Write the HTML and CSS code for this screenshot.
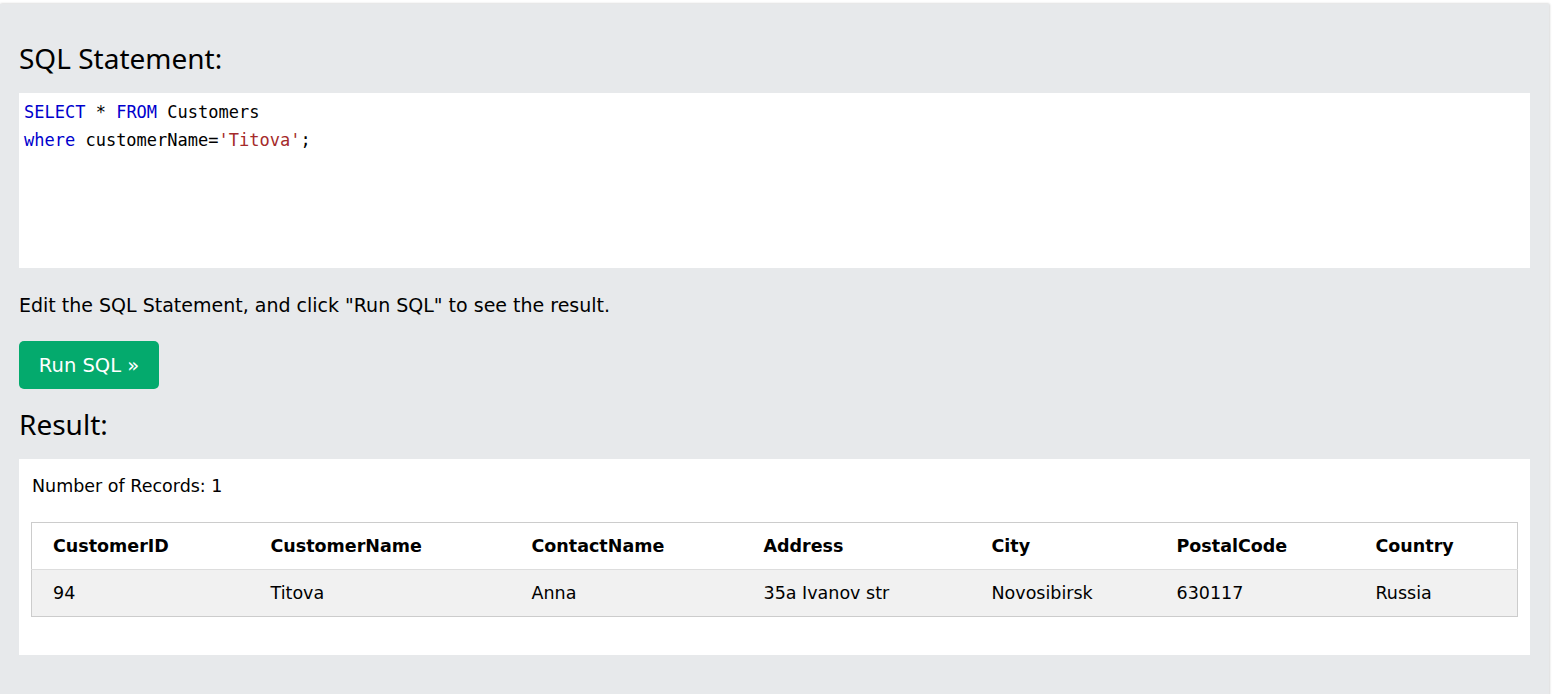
FILE: index.html
```html
<!DOCTYPE html>
<html>
<head>
<meta charset="utf-8">
<link rel="stylesheet" href="styles.css">
</head>
<body>
<div class="panel">
  <h2 class="title">SQL Statement:</h2>
  <div class="code">
    <div class="code-line"><span class="kw">SELECT</span> * <span class="kw">FROM</span> Customers</div>
    <div class="code-line"><span class="kw">where</span> customerName=<span class="str">'Titova'</span>;</div>
  </div>
  <p class="hint">Edit the SQL Statement, and click "Run SQL" to see the result.</p>
  <button class="run">Run SQL &raquo;</button>
  <h2 class="title result-title">Result:</h2>
  <div class="result">
    <div class="count">Number of Records: 1</div>
    <table class="grid">
      <colgroup>
        <col class="c1"><col class="c2"><col class="c3"><col class="c4"><col class="c5"><col class="c6"><col class="c7">
      </colgroup>
      <tr class="head">
        <th>CustomerID</th><th>CustomerName</th><th>ContactName</th><th>Address</th><th>City</th><th>PostalCode</th><th>Country</th>
      </tr>
      <tr class="row">
        <td>94</td><td>Titova</td><td>Anna</td><td>35a Ivanov str</td><td>Novosibirsk</td><td>630117</td><td>Russia</td>
      </tr>
    </table>
  </div>
</div>
</body>
</html>
```
FILE: styles.css
```css
html, body {
  margin: 0;
  padding: 0;
  background: #ffffff;
}
body {
  font-family: "DejaVu Sans", Verdana, sans-serif;
  color: #000;
  overflow: hidden;
}
.panel {
  margin-top: 4px;
  width: 1549px;
  height: 700px;
  box-sizing: border-box;
  background: #e7e9eb;
  padding: 37px 19px 0 19px;
  box-shadow: 0 -1px 2px rgba(0,0,0,0.08), 1px 0 2px rgba(0,0,0,0.12);
}
.title {
  margin: 0;
  font-family: "Noto Sans", "Open Sans", sans-serif;
  font-weight: 400;
  font-size: 28px;
  line-height: 34px;
  color: #000;
}
.code {
  margin-top: 18px;
  background: #fff;
  height: 175px;
  box-sizing: border-box;
  padding: 5px 5px;
  font-family: "DejaVu Sans Mono", "Liberation Mono", monospace;
  font-size: 17px;
  line-height: 28px;
  color: #000;
}
.kw { color: #0000cd; }
.str { color: #a52a2a; }
.hint {
  margin: 25px 0 0 0;
  font-size: 19px;
  line-height: 24px;
}
.run {
  display: block;
  margin-top: 24px;
  width: 140px;
  height: 48px;
  border: none;
  border-radius: 5px;
  background: #04aa6d;
  color: #fff;
  font-family: "DejaVu Sans", Verdana, sans-serif;
  font-size: 19.5px;
  padding: 0;
}
.result-title {
  margin-top: 18px;
}
.result {
  margin-top: 18px;
  background: #fff;
  height: 196px;
  box-sizing: border-box;
  padding: 16px 12px 0 12px;
}
.count {
  font-size: 17.5px;
  line-height: 22px;
  padding-left: 1px;
}
.grid {
  margin-top: 25px;
  width: 1486px;
  border-collapse: collapse;
  border: 1px solid #cccccc;
  table-layout: fixed;
  font-size: 17.5px;
}
.c1 { width: 218px; }
.c2 { width: 261px; }
.c3 { width: 232px; }
.c4 { width: 228px; }
.c5 { width: 185px; }
.c6 { width: 199px; }
.c7 { width: 163px; }
.grid th, .grid td {
  text-align: left;
  padding: 0 0 0 21px;
  height: 46px;
  vertical-align: middle;
}
.grid th {
  font-weight: 700;
}
.row td {
  background: #f1f1f1;
  border-top: 1px solid #dddddd;
}
```
